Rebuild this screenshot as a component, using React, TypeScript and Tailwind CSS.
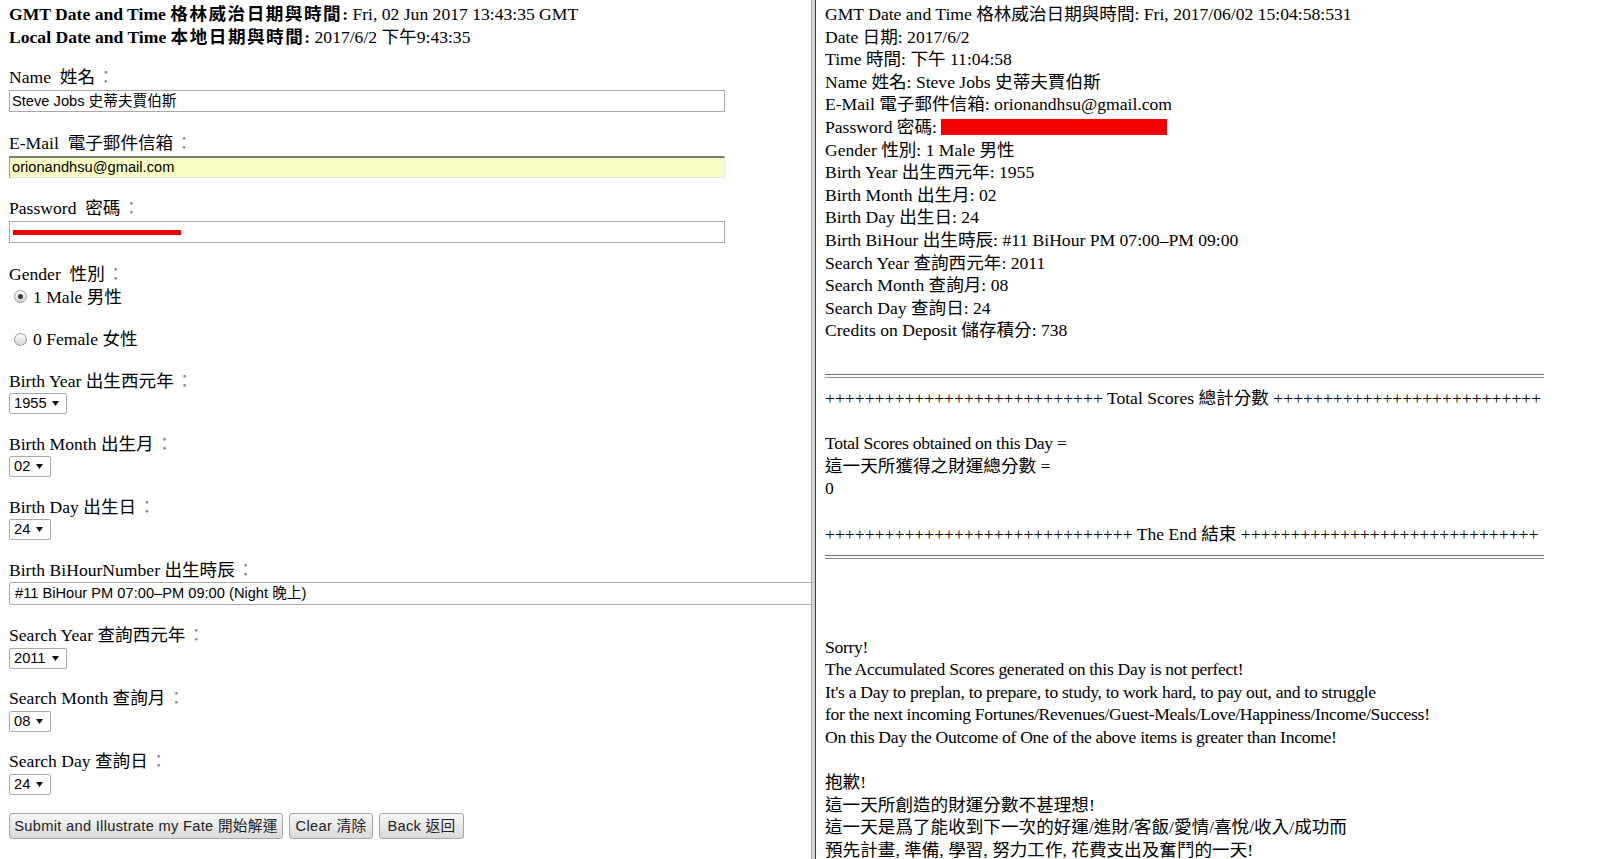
import React from "react";

const serif = "font-['Liberation_Serif','Noto_Sans_CJK_TC',serif]";
const sans = "font-['Liberation_Sans','Noto_Sans_CJK_TC',sans-serif]";

function Colon() {
  return <span className="ml-[2px] text-[#8a8a8a]">：</span>;
}

function FieldLabel({ en, zh, wide }: { en: string; zh: string; wide?: boolean }) {
  return (
    <div className="h-[22.6px] whitespace-nowrap">
      {en}
      {wide ? "\u00a0 " : " "}
      {zh}
      <Colon />
    </div>
  );
}

function TextField({
  en,
  zh,
  children,
  className = "",
}: {
  en: string;
  zh: string;
  children?: React.ReactNode;
  className?: string;
}) {
  return (
    <div className="mb-[19.5px]">
      <FieldLabel en={en} zh={zh} wide />
      <div
        className={`mt-[1.5px] flex h-[22px] w-[716px] items-center pl-[2px] text-[14.67px] ${sans} ${className}`}
      >
        {children}
      </div>
    </div>
  );
}

function Arrow() {
  return (
    <svg width="7" height="5" viewBox="0 0 7 5" className="ml-auto mr-[7px] shrink-0">
      <polygon points="0,0 7,0 3.5,5" fill="#111" />
    </svg>
  );
}

function SelectField({
  en,
  zh,
  value,
  width,
}: {
  en: string;
  zh: string;
  value: string;
  width: string;
}) {
  return (
    <div className="mb-[18.4px]">
      <FieldLabel en={en} zh={zh} />
      <div
        className={`mt-[1px] flex h-[21px] items-center rounded-[2px] border border-[#a9a9a9] bg-white pl-[4px] text-[14.67px] ${sans} ${width}`}
      >
        <span>{value}</span>
        <Arrow />
      </div>
    </div>
  );
}

function Radio({ checked }: { checked?: boolean }) {
  return (
    <span className="ml-[5px] mr-[6px] flex h-[13px] w-[13px] shrink-0 items-center justify-center rounded-full border border-[#9a9a9a] bg-linear-to-b from-[#fdfdfd] to-[#d6d6d6]">
      {checked && <span className="h-[5px] w-[5px] rounded-full bg-[#3a3a3a]" />}
    </span>
  );
}

function Btn({ children, w }: { children: React.ReactNode; w: string }) {
  return (
    <div
      className={`flex h-[26px] items-center justify-center rounded-[3px] border border-[#a6a6a6] bg-linear-to-b from-[#f7f7f7] to-[#dadada] text-[14.67px] tracking-[0.3px] text-[#222] ${sans} ${w}`}
    >
      {children}
    </div>
  );
}

function LeftPane() {
  return (
    <div className={`h-full w-[811px] shrink-0 overflow-hidden pl-[9px] pt-[3px] text-[17.6px] leading-[22.6px] ${serif}`}>
      <div className="h-[22.6px] whitespace-nowrap">
        <b>
          GMT Date and Time <span className="tracking-[1.5px]">格林威治日期與時間</span>:
        </b>{" "}
        Fri, 02 Jun 2017 13:43:35 GMT
      </div>
      <div className="h-[22.6px] whitespace-nowrap">
        <b>
          Local Date and Time <span className="tracking-[1.5px]">本地日期與時間</span>:
        </b>{" "}
        2017/6/2 下午9:43:35
      </div>

      <div className="mt-[18px]">
        <TextField en="Name" zh="姓名" className="border border-[#a9a9a9] bg-white">
          Steve Jobs 史蒂夫賈伯斯
        </TextField>
        <TextField
          en="E-Mail"
          zh="電子郵件信箱"
          className="border-t-2 border-l border-r border-b border-t-[#7c7c7c] border-l-[#9c9c9c] border-r-[#e2e2e2] border-b-[#e2e2e2] bg-[#fafdc4]"
        >
          orionandhsu@gmail.com
        </TextField>
        <TextField en="Password" zh="密碼" className="border border-[#a9a9a9] bg-white">
          <span className="ml-[1px] h-[5px] w-[168px] bg-[#f00000]" />
        </TextField>

        <div className="mb-[18.8px]">
          <FieldLabel en="Gender" zh="性別" wide />
          <div className="flex h-[22.6px] items-center whitespace-nowrap">
            <Radio checked />
            <span>1 Male 男性</span>
          </div>
          <div className="mt-[20px] flex h-[22.6px] items-center whitespace-nowrap">
            <Radio />
            <span>0 Female 女性</span>
          </div>
        </div>

        <SelectField en="Birth Year" zh="出生西元年" value="1955" width="w-[58px]" />
        <SelectField en="Birth Month" zh="出生月" value="02" width="w-[42px]" />
        <SelectField en="Birth Day" zh="出生日" value="24" width="w-[42px]" />

        <div className="mb-[19px]">
          <FieldLabel en="Birth BiHourNumber" zh="出生時辰" />
          <div
            className={`mt-[1px] flex h-[23px] w-[830px] items-center rounded-[2px] border border-[#a9a9a9] bg-white pl-[5px] text-[14.67px] ${sans}`}
          >
            #11 BiHour PM 07:00–PM 09:00 (Night 晚上)
          </div>
        </div>

        <SelectField en="Search Year" zh="查詢西元年" value="2011" width="w-[58px]" />
        <SelectField en="Search Month" zh="查詢月" value="08" width="w-[42px]" />
        <SelectField en="Search Day" zh="查詢日" value="24" width="w-[42px]" />

        <div className="flex gap-[6px]">
          <Btn w="w-[274px]">Submit and Illustrate my Fate 開始解運</Btn>
          <Btn w="w-[84px]">Clear 清除</Btn>
          <Btn w="w-[85px]">Back 返回</Btn>
        </div>
      </div>
    </div>
  );
}

function Line({ children, tight }: { children?: React.ReactNode; tight?: boolean }) {
  return (
    <div className={`h-[22.6px] whitespace-nowrap ${tight ? "tracking-[-0.3px]" : ""}`}>
      {children}
    </div>
  );
}

function DoubleRule() {
  return (
    <div className="flex h-[22.6px] items-center">
      <div className="h-[4px] w-[719px] border-t border-b border-t-[#6e6e6e] border-b-[#8c8c8c]" />
    </div>
  );
}

function RightPane() {
  const info = [
    "GMT Date and Time 格林威治日期與時間: Fri, 2017/06/02 15:04:58:531",
    "Date 日期: 2017/6/2",
    "Time 時間: 下午 11:04:58",
    "Name 姓名: Steve Jobs 史蒂夫賈伯斯",
    "E-Mail 電子郵件信箱: orionandhsu@gmail.com",
  ];
  const info2 = [
    "Gender 性別: 1 Male 男性",
    "Birth Year 出生西元年: 1955",
    "Birth Month 出生月: 02",
    "Birth Day 出生日: 24",
    "Birth BiHour 出生時辰: #11 BiHour PM 07:00–PM 09:00",
    "Search Year 查詢西元年: 2011",
    "Search Month 查詢月: 08",
    "Search Day 查詢日: 24",
    "Credits on Deposit 儲存積分: 738",
  ];
  return (
    <div className={`h-full flex-1 overflow-hidden pl-[9px] pt-[3px] text-[17.6px] leading-[22.6px] ${serif}`}>
      {info.map((t) => (
        <Line key={t}>{t}</Line>
      ))}
      <div className="flex h-[22.6px] items-center whitespace-nowrap">
        <span>Password 密碼:&nbsp;</span>
        <span className="h-[16px] w-[226px] bg-[#f20000]" />
      </div>
      {info2.map((t) => (
        <Line key={t}>{t}</Line>
      ))}
      <Line />
      <DoubleRule />
      <Line>
        {"+".repeat(28)} Total Scores 總計分數 {"+".repeat(27)}
      </Line>
      <Line />
      <Line tight>Total Scores obtained on this Day =</Line>
      <Line>這一天所獲得之財運總分數 =</Line>
      <Line>0</Line>
      <Line />
      <Line>
        {"+".repeat(31)} The End 結束 {"+".repeat(30)}
      </Line>
      <DoubleRule />
      <Line />
      <Line />
      <Line />
      <Line tight>Sorry!</Line>
      <Line tight>The Accumulated Scores generated on this Day is not perfect!</Line>
      <Line tight>It's a Day to preplan, to prepare, to study, to work hard, to pay out, and to struggle</Line>
      <Line tight>for the next incoming Fortunes/Revenues/Guest-Meals/Love/Happiness/Income/Success!</Line>
      <Line tight>On this Day the Outcome of One of the above items is greater than Income!</Line>
      <Line />
      <Line>抱歉!</Line>
      <Line>這一天所創造的財運分數不甚理想!</Line>
      <Line>這一天是爲了能收到下一次的好運/進財/客飯/愛情/喜悅/收入/成功而</Line>
      <Line>預先計畫, 準備, 學習, 努力工作, 花費支出及奮鬥的一天!</Line>
    </div>
  );
}

export default function App() {
  return (
    <div className="flex h-[859px] w-[1600px] overflow-hidden bg-white text-black">
      <LeftPane />
      {/* frame splitter */}
      <div className="flex h-full shrink-0">
        <div className="w-[1px] bg-[#a8a8a8]" />
        <div className="w-[3px] bg-[#d4d4d4]" />
        <div className="w-[1px] bg-[#3c3c3c]" />
      </div>
      <RightPane />
    </div>
  );
}
